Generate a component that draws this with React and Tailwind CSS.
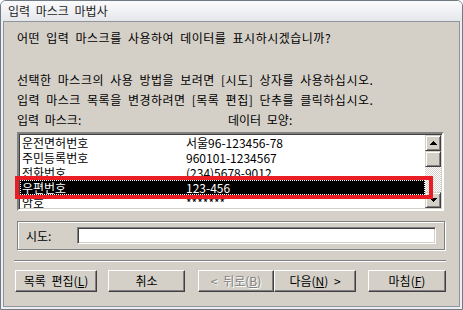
function Btn({ w, children, disabled, className = "" }) {
  return (
    <div
      className={`${w} h-[22px] shrink-0 flex items-center justify-center bg-[#d4d0c8] border border-t-white border-l-white border-r-[#404040] border-b-[#404040] shadow-[inset_-1px_-1px_0_#808080] leading-none ${
        disabled ? "text-[#808080] [text-shadow:1px_1px_0_#fff]" : "text-black"
      } ${className}`}
    >
      {children}
    </div>
  );
}

function ScrollBtn({ children, className = "" }) {
  return (
    <div
      className={`w-[16px] h-[16px] flex items-center justify-center bg-[#d4d0c8] border border-t-[#d4d0c8] border-l-[#d4d0c8] border-r-[#404040] border-b-[#404040] shadow-[inset_1px_1px_0_#fff,inset_-1px_-1px_0_#808080] ${className}`}
    >
      {children}
    </div>
  );
}

const rows = [
  ["운전면허번호", "서울96-123456-78"],
  ["주민등록번호", "960101-1234567"],
  ["전화번호", "(234)5678-9012"],
  ["우편번호", "123-456"],
  ["암호", "*******"],
];

export default function App() {
  return (
    <div className="w-[463px] h-[310px] bg-white font-['Noto_Sans_CJK_KR',sans-serif] text-[12px] text-black [word-spacing:3px]">
      <div className="flex flex-col w-[463px] h-[310px] border border-[#6f7a85] rounded-t-[6px] bg-[#eceef1] overflow-hidden">
        {/* title bar */}
        <div className="h-[20px] shrink-0 flex items-center pl-[7px] bg-gradient-to-b from-[#fbfbfc] to-[#e5e7eb] text-[#1c1c1c] leading-none">
          입력 마스크 마법사
        </div>

        {/* body */}
        <div className="flex-1 mx-[2px] mb-[2px] border border-[#8f959c] bg-[#d4d0c8] flex flex-col pl-[13px] pr-[13px] pt-[6px]">
          <div className="leading-[20px] h-[20px] tracking-[0.5px]">
            어떤 입력 마스크를 사용하여 데이터를 표시하시겠습니까?
          </div>
          <div className="mt-[22px] leading-[20px] h-[20px] tracking-[0.5px]">
            선택한 마스크의 사용 방법을 보려면 [시도] 상자를 사용하십시오.
          </div>
          <div className="leading-[20px] h-[20px] tracking-[0.5px]">
            입력 마스크 목록을 변경하려면 [목록 편집] 단추를 클릭하십시오.
          </div>
          <div className="flex leading-[20px] h-[20px]">
            <div className="w-[211px]">입력 마스크:</div>
            <div>데이터 모양:</div>
          </div>

          {/* listbox */}
          <div className="relative mt-[2px] w-[427px] h-[79px] shrink-0 bg-white border-2 border-t-[#808080] border-l-[#808080] border-r-white border-b-white">
            <div className="flex w-full h-full shadow-[inset_1px_1px_0_#404040,inset_-1px_-1px_0_#d4d0c8] p-[1px]">
              <div className="flex-1 overflow-hidden">
                {rows.map(([a, b], i) => (
                  <div
                    key={a}
                    className={`flex h-[15px] leading-[15px] pl-[2px] ${
                      i === 3
                        ? "bg-black text-white outline-1 outline-dotted outline-white -outline-offset-1"
                        : ""
                    }`}
                  >
                    <div className="w-[164px] shrink-0">{a}</div>
                    <div>{b}</div>
                  </div>
                ))}
              </div>
              {/* scrollbar */}
              <div className="w-[16px] flex flex-col">
                <ScrollBtn>
                  <svg width="7" height="4" viewBox="0 0 7 4">
                    <path d="M3 0H4V1H5V2H6V3H7V4H0V3H1V2H2V1H3Z" fill="#000" />
                  </svg>
                </ScrollBtn>
                <ScrollBtn />
                <div className="flex-1 [background-image:repeating-conic-gradient(#ffffff_0%_25%,#d4d0c8_0%_50%)] [background-size:2px_2px]" />
                <ScrollBtn>
                  <svg width="7" height="4" viewBox="0 0 7 4">
                    <path d="M0 0H7V1H6V2H5V3H4V4H3V3H2V2H1V1H0Z" fill="#000" />
                  </svg>
                </ScrollBtn>
              </div>
            </div>
            {/* red annotation */}
            <div className="absolute left-[-4px] top-[42px] w-[418px] h-[23px] border-4 border-[#ea1c24] pointer-events-none" />
          </div>

          {/* try group */}
          <div className="mt-[10px] w-[428px] h-[29px] shrink-0 border border-[#808080] shadow-[inset_1px_1px_0_#fff,1px_1px_0_#fff] flex items-center pl-[8px]">
            <div className="w-[51px] shrink-0 leading-none">시도:</div>
            <div className="w-[359px] h-[17px] bg-white border border-t-[#808080] border-l-[#808080] border-r-white border-b-white shadow-[inset_1px_1px_0_#404040,inset_-1px_-1px_0_#d4d0c8]" />
          </div>

          {/* separator */}
          <div className="mt-[10px] -ml-[3px] w-[432px] h-[2px] shrink-0 border-t border-t-[#808080] border-b border-b-white" />

          {/* buttons */}
          <div className="mt-[8px] -ml-[2px] flex">
            <Btn w="w-[82px]">
              목록 편집(<span className="underline underline-offset-1">L</span>)
            </Btn>
            <Btn w="w-[77px]" className="ml-[11px]">
              취소
            </Btn>
            <Btn w="w-[76px]" className="ml-[13px]" disabled>
              &lt; 뒤로(<span className="underline underline-offset-1">B</span>)
            </Btn>
            <Btn w="w-[82px]">
              다음(<span className="underline underline-offset-1">N</span>) &gt;
            </Btn>
            <Btn w="w-[78px]" className="ml-[12px]">
              마침(<span className="underline underline-offset-1">F</span>)
            </Btn>
          </div>
        </div>
      </div>
    </div>
  );
}
